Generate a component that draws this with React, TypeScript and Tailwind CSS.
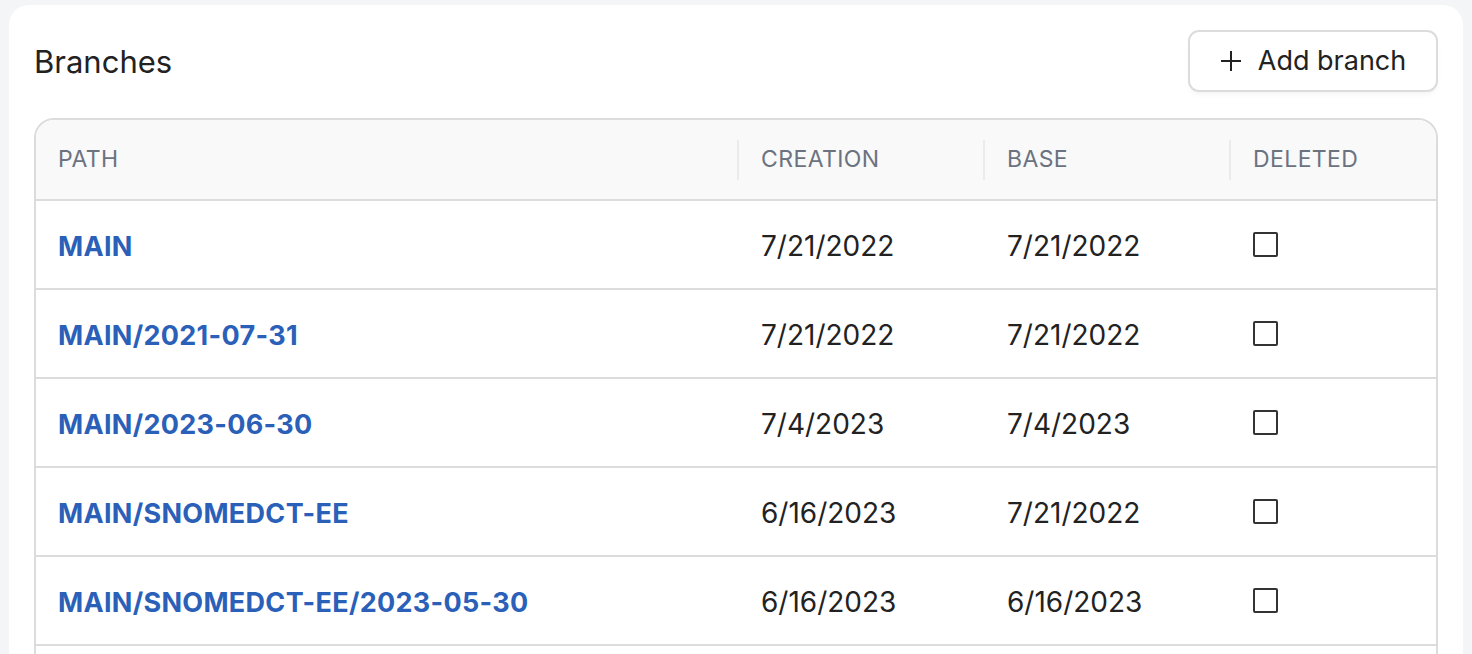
const rows = [
  { path: 'MAIN', creation: '7/21/2022', base: '7/21/2022' },
  { path: 'MAIN/2021-07-31', creation: '7/21/2022', base: '7/21/2022' },
  { path: 'MAIN/2023-06-30', creation: '7/4/2023', base: '7/4/2023' },
  { path: 'MAIN/SNOMEDCT-EE', creation: '6/16/2023', base: '7/21/2022' },
  { path: 'MAIN/SNOMEDCT-EE/2023-05-30', creation: '6/16/2023', base: '6/16/2023' },
]

function HeadCell({ label, divider }: { label: string; divider?: boolean }) {
  return (
    <th className="p-0 text-left font-normal">
      <div className="flex h-[79px] items-center">
        {divider && <span className="h-10 w-[2px] bg-[#ebebeb]" />}
        <span className="pl-[22px] text-[23px] tracking-[0.4px] text-[#6b7280] uppercase">{label}</span>
      </div>
    </th>
  )
}

export default function App() {
  return (
    <div className="h-screen overflow-hidden bg-[#f4f5f7] pt-[5px] pr-[9px] pl-[9px] font-['Inter',sans-serif]">
      <div className="h-[700px] rounded-[20px] bg-white p-[25px]">
        {/* header */}
        <div className="flex items-center justify-between">
          <h1 className="pt-[3px] text-[31px] font-normal text-[#222]">Branches</h1>
          <button className="flex h-[62px] w-[250px] items-center justify-center gap-[16px] rounded-[11px] border-2 border-[#dcdcdc] bg-white text-[27px] text-[#222] shadow-[0_4px_6px_-2px_rgba(0,0,0,0.05)]">
            <svg width="22" height="22" viewBox="0 0 22 22" fill="none" stroke="#222" strokeWidth="2">
              <path d="M11 1v20M1 11h20" />
            </svg>
            Add branch
          </button>
        </div>

        {/* table */}
        <div className="mt-[26px] overflow-hidden rounded-[20px] border-2 border-[#dcdcdc]">
          <table className="w-full table-fixed border-collapse">
            <colgroup>
              <col className="w-[701px]" />
              <col className="w-[246px]" />
              <col className="w-[246px]" />
              <col />
            </colgroup>
            <thead className="bg-[#f9f9f9]">
              <tr className="border-b-2 border-[#dcdcdc]">
                <HeadCell label="Path" />
                <HeadCell label="Creation" divider />
                <HeadCell label="Base" divider />
                <HeadCell label="Deleted" divider />
              </tr>
            </thead>
            <tbody>
              {rows.map((r) => (
                <tr key={r.path} className="h-[89px] border-b-2 border-[#dcdcdc]">
                  <td className="pt-[5px] pl-[22px]">
                    <a href="#" className="text-[27px] font-bold tracking-[0.3px] text-[#2b60b9]">{r.path}</a>
                  </td>
                  <td className="pt-[2px] pl-6 text-[28px] text-[#222]">{r.creation}</td>
                  <td className="pt-[2px] pl-6 text-[28px] text-[#222]">{r.base}</td>
                  <td className="pl-6">
                    <span className="block h-[25px] w-[25px] rounded-[2px] border-[2.5px] border-[#333]" />
                  </td>
                </tr>
              ))}
              <tr className="h-[89px]">
                <td colSpan={4} />
              </tr>
            </tbody>
          </table>
        </div>
      </div>
    </div>
  )
}
